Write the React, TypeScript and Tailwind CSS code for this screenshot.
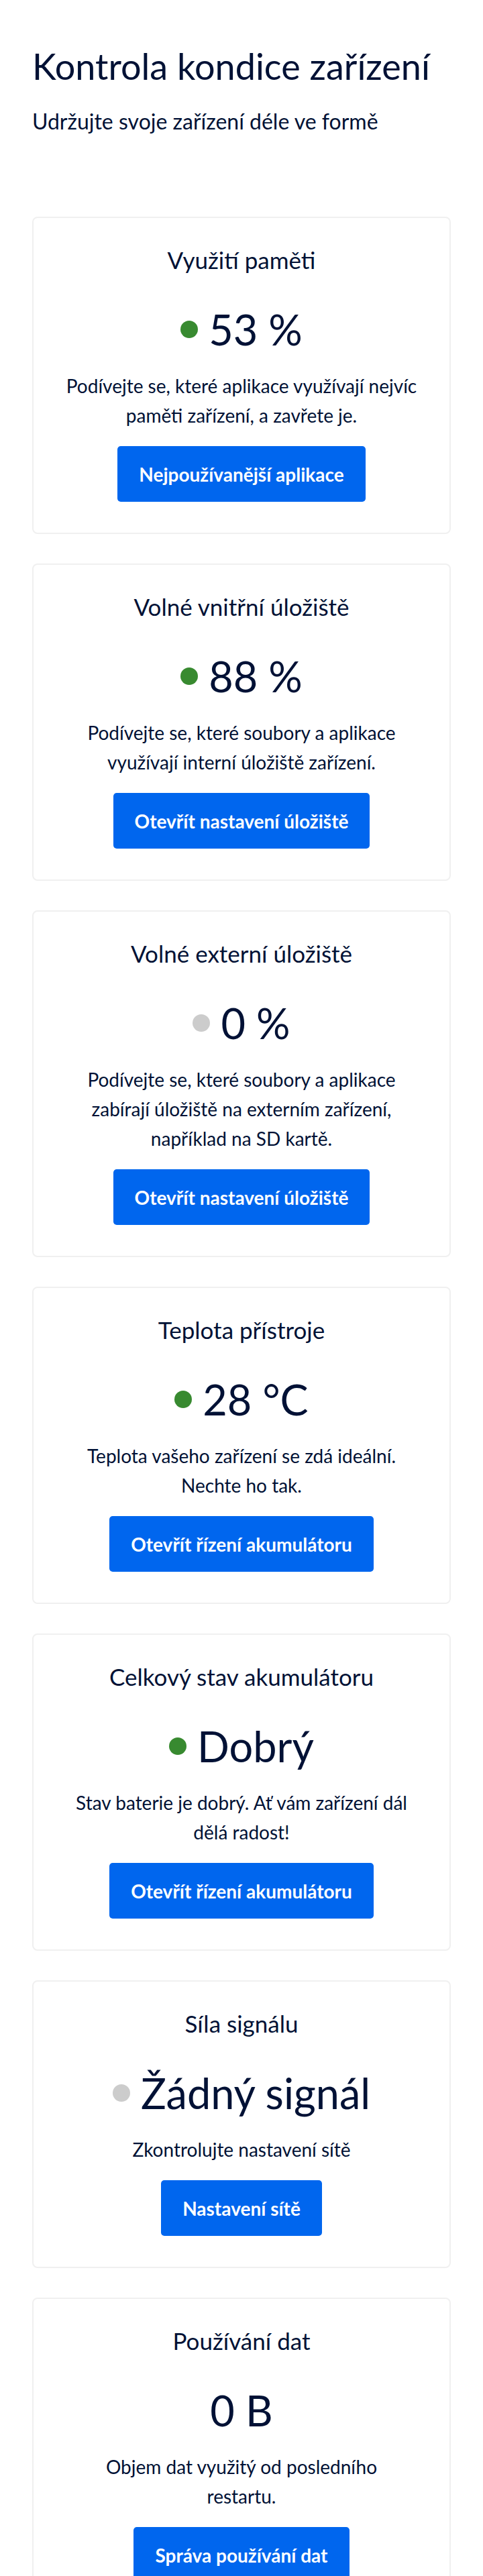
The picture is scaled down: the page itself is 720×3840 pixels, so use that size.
import React from "react";

type Status = "good" | "none" | null;

type Check = {
  title: string;
  value: string;
  status: Status;
  text: string;
  action: string;
};

const checks: Check[] = [
  {
    title: "Využití paměti",
    value: "53 %",
    status: "good",
    text: "Podívejte se, které aplikace využívají nejvíc paměti zařízení, a zavřete je.",
    action: "Nejpoužívanější aplikace",
  },
  {
    title: "Volné vnitřní úložiště",
    value: "88 %",
    status: "good",
    text: "Podívejte se, které soubory a aplikace využívají interní úložiště zařízení.",
    action: "Otevřít nastavení úložiště",
  },
  {
    title: "Volné externí úložiště",
    value: "0 %",
    status: "none",
    text: "Podívejte se, které soubory a aplikace zabírají úložiště na externím zařízení, například na SD kartě.",
    action: "Otevřít nastavení úložiště",
  },
  {
    title: "Teplota přístroje",
    value: "28 °C",
    status: "good",
    text: "Teplota vašeho zařízení se zdá ideální. Nechte ho tak.",
    action: "Otevřít řízení akumulátoru",
  },
  {
    title: "Celkový stav akumulátoru",
    value: "Dobrý",
    status: "good",
    text: "Stav baterie je dobrý. Ať vám zařízení dál dělá radost!",
    action: "Otevřít řízení akumulátoru",
  },
  {
    title: "Síla signálu",
    value: "Žádný signál",
    status: "none",
    text: "Zkontrolujte nastavení sítě",
    action: "Nastavení sítě",
  },
  {
    title: "Používání dat",
    value: "0 B",
    status: null,
    text: "Objem dat využitý od posledního\nrestartu.",
    action: "Správa používání dat",
  },
];

function CheckCard({ check }: { check: Check }) {
  return (
    <div className="flex flex-col items-center rounded-lg border-2 border-[#f0f0f0] bg-white px-10 pt-10 pb-[46px] text-center">
      <h2 className="text-[35px] leading-[44px] font-normal">{check.title}</h2>
      <div className="mt-[43px] flex items-center gap-4">
        {check.status === "good" && <span className="h-[26px] w-[26px] rounded-full bg-[#388a30]" />}
        {check.status === "none" && <span className="h-[26px] w-[26px] rounded-full bg-[#cccccc]" />}
        <span className="text-[63px] leading-[77px]">{check.value}</span>
      </div>
      <p className="mt-6 text-[28px] leading-[44px] whitespace-pre-line">{check.text}</p>
      <button className="mt-6 h-[83px] rounded-[5px] bg-[#0066ee] px-[32px] text-[28px] font-bold text-white">
        {check.action}
      </button>
    </div>
  );
}

export default function App() {
  return (
    <div className="min-h-screen bg-white px-12 pt-[67px] pb-12 text-[#001135] [font-family:Lato,'Noto_Sans',sans-serif]">
      <h1 className="text-[54px] leading-[1.2] font-normal">Kontrola kondice zařízení</h1>
      <p className="mt-[30px] text-[32px] leading-[1.2]">Udržujte svoje zařízení déle ve formě</p>

      <div className="mt-[123px] flex flex-col gap-11">
        {checks.map((c) => (
          <CheckCard key={c.title} check={c} />
        ))}
      </div>
    </div>
  );
}
